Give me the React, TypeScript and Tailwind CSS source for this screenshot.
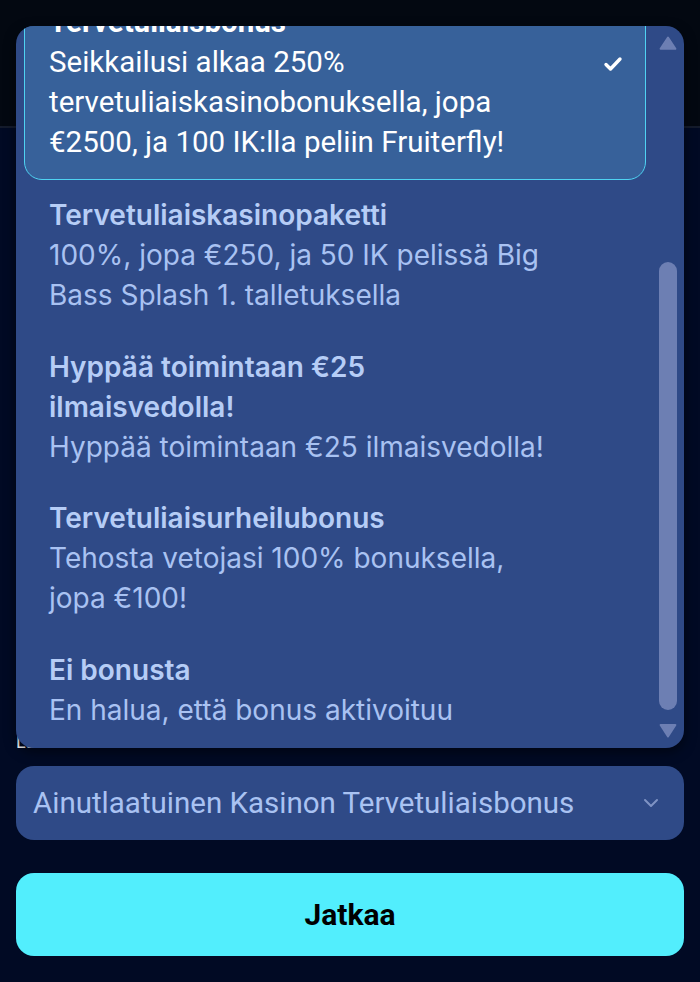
import React from 'react';

type Option = {
  title: string;
  lines: string[];
  selected?: boolean;
};

const options: Option[] = [
  {
    title: 'Tervetuliaisbonus',
    lines: ['Seikkailusi alkaa 250%', 'tervetuliaiskasinobonuksella, jopa', '€2500, ja 100 IK:lla peliin Fruiterfly!'],
    selected: true,
  },
  {
    title: 'Tervetuliaiskasinopaketti',
    lines: ['100%, jopa €250, ja 50 IK pelissä Big', 'Bass Splash 1. talletuksella'],
  },
  {
    title: 'Hyppää toimintaan €25\nilmaisvedolla!',
    lines: ['Hyppää toimintaan €25 ilmaisvedolla!'],
  },
  {
    title: 'Tervetuliaisurheilubonus',
    lines: ['Tehosta vetojasi 100% bonuksella,', 'jopa €100!'],
  },
  {
    title: 'Ei bonusta',
    lines: ['En halua, että bonus aktivoituu'],
  },
];

const OptionRow: React.FC<{ option: Option }> = ({ option }) => {
  if (option.selected) {
    return (
      <div className="ml-[8px] mr-[38px] flex items-start rounded-[18px] border border-[#4fd3f2] bg-[#37619a] py-[17px] pl-[24px] pr-[22px] font-['Roboto',sans-serif] text-[29.5px] leading-[40px] text-white">
        <div className="flex-1 whitespace-nowrap">
          <div className="font-bold">{option.title}</div>
          {option.lines.map((l) => (
            <div key={l}>{l}</div>
          ))}
        </div>
        <svg className="mt-[54px] h-[16px] w-[20px]" viewBox="0 0 20 16" fill="none">
          <path d="M3 8.5l4.5 4.5L17 3" stroke="#fff" strokeWidth="3.4" strokeLinecap="round" strokeLinejoin="round" />
        </svg>
      </div>
    );
  }
  return (
    <div className="px-[33px] pb-[16.5px] pt-[15px] font-['Inter',sans-serif] text-[28px] leading-[40px] text-[#a9c2f2]">
      <div className="whitespace-pre-line font-semibold text-[#b6cdf6]">{option.title}</div>
      {option.lines.map((l) => (
        <div key={l} className="whitespace-nowrap">
          {l}
        </div>
      ))}
    </div>
  );
};

export default function App() {
  return (
    <div className="relative h-[982px] w-[700px] overflow-hidden bg-[#010a24] font-['Roboto',sans-serif]">
      {/* page header band behind the open list */}
      <div className="h-[128px] border-b-2 border-[#141b2c] bg-[#030811]" />

      {/* form */}
      <div className="px-[16px] pt-[603px]">
        <label className="block text-[18px] leading-[22px] text-white">Lunasta bonus</label>
        <div className="mt-[13px] flex h-[74px] items-center justify-between rounded-[18px] bg-[#2f4a87] pl-[17px] pr-[24px]">
          <span className="text-[29.5px] text-[#a9c2f2]">Ainutlaatuinen Kasinon Tervetuliaisbonus</span>
          <svg className="h-[12px] w-[18px]" viewBox="0 0 18 12" fill="none">
            <path d="M3 3l6 6 6-6" stroke="#7f93c4" strokeWidth="2" strokeLinecap="round" strokeLinejoin="round" />
          </svg>
        </div>
        <button className="mt-[33px] flex h-[83px] w-full items-center justify-center rounded-[18px] bg-[#52eefd] text-[30px] font-bold text-black">
          Jatkaa
        </button>
      </div>

      {/* open option list */}
      <div className="absolute left-[16px] right-[16px] top-[26px] h-[722px] overflow-hidden rounded-[18px] bg-[#2f4a87] shadow-[0_4px_12px_rgba(0,0,0,0.5)]">
        <div className="-mt-[42px]">
          {options.map((o) => (
            <OptionRow key={o.title} option={o} />
          ))}
        </div>
        {/* scrollbar */}
        <div className="absolute bottom-0 right-0 top-0 flex w-[38px] flex-col items-center py-[10px] pl-[6px]">
          <svg className="h-[14px] w-[18px]" viewBox="0 0 18 14">
            <path d="M9 1.5L16.5 13H1.5z" fill="#6d7fb3" strokeLinejoin="round" stroke="#6d7fb3" strokeWidth="2" />
          </svg>
          <div className="mt-[212px] h-[454px] w-[18px] rounded-full bg-[#6d7fb3]" />
          <svg className="mt-[14px] h-[14px] w-[18px]" viewBox="0 0 18 14">
            <path d="M9 12.5L16.5 1H1.5z" fill="#6d7fb3" strokeLinejoin="round" stroke="#6d7fb3" strokeWidth="2" />
          </svg>
        </div>
      </div>
    </div>
  );
}
